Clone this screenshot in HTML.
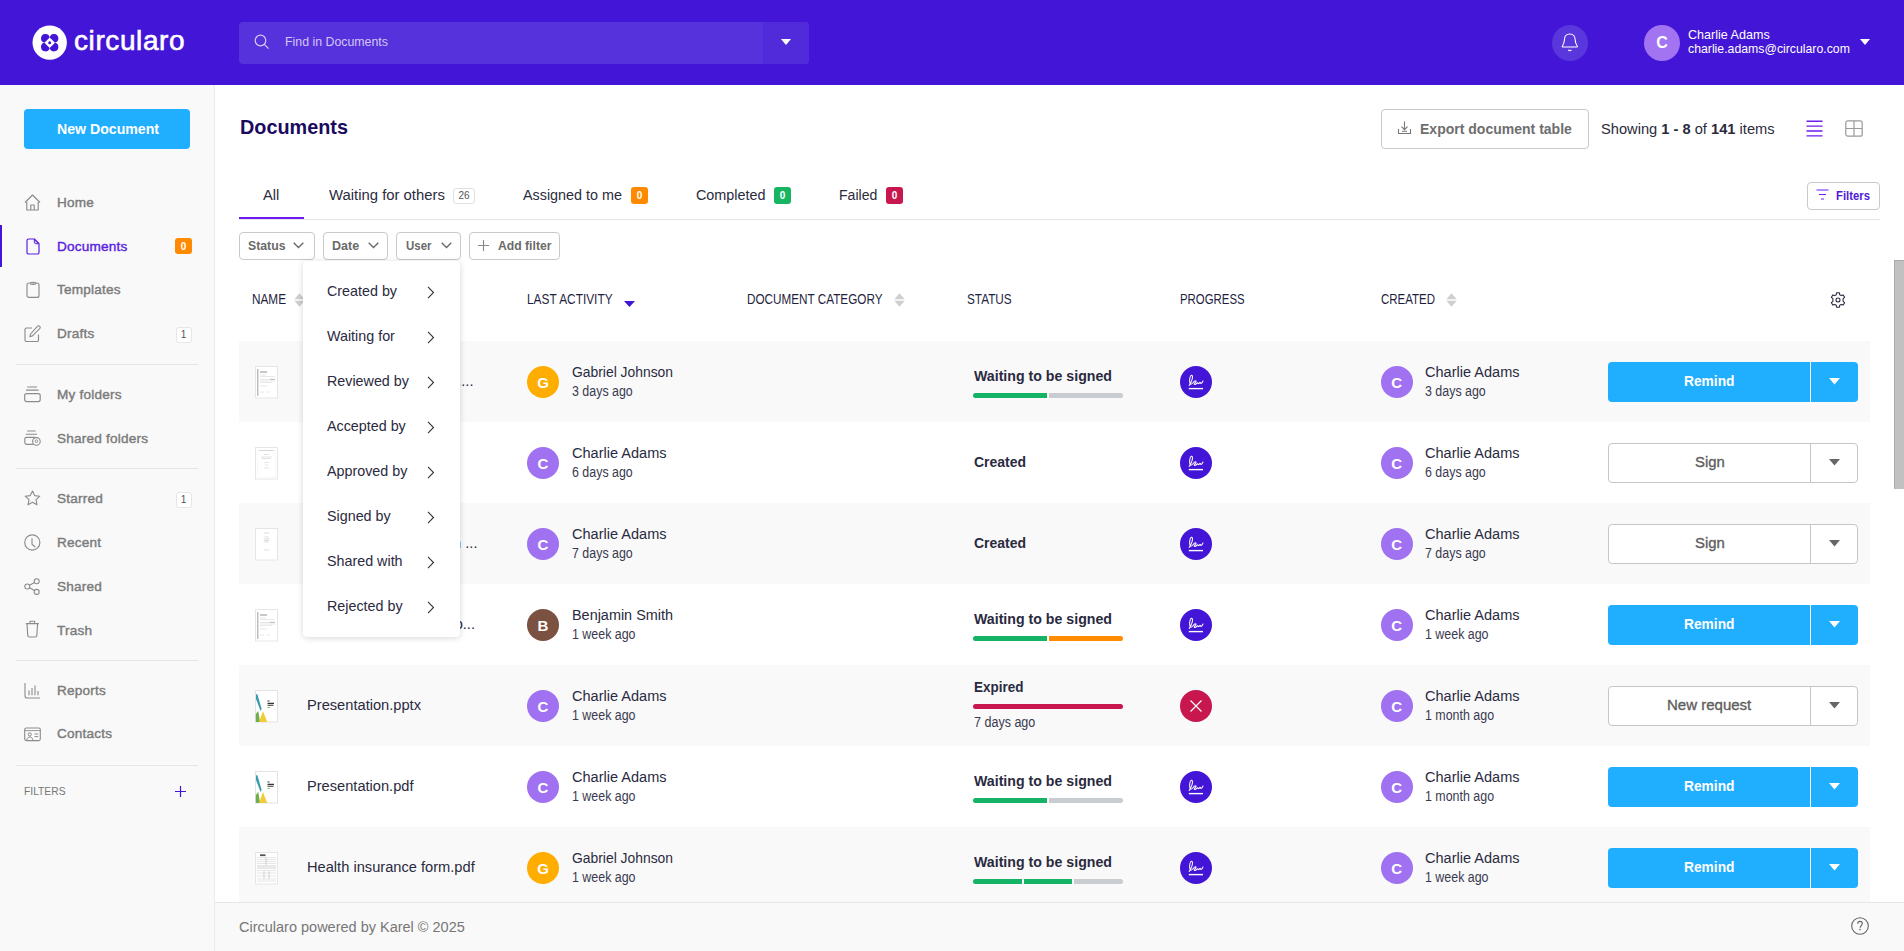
<!DOCTYPE html>
<html><head><meta charset="utf-8"><style>
html,body{margin:0;padding:0;width:1904px;height:951px;overflow:hidden;background:#fff;font-family:"Liberation Sans", sans-serif;}
.a{position:absolute;}
.t{position:absolute;white-space:nowrap;}
</style></head><body>
<div class="a" style="left:0px;top:0px;width:1904px;height:85px;background:#4315d6;"></div><svg class="a" style="left:32px;top:25px;" width="35" height="35" viewBox="0 0 35 35" fill="none"><circle cx="17.7" cy="17.6" r="17.2" fill="#fff"/><g fill="#4315d6"><path d="M17.7 12.4 L12.4 17.7 A4.4 4.4 0 1 1 17.7 12.4Z"/><path d="M17.7 12.4 L23 17.7 A4.4 4.4 0 1 0 17.7 12.4Z"/><path d="M17.7 23 L12.4 17.7 A4.4 4.4 0 1 0 17.7 23Z"/><path d="M17.7 23 L23 17.7 A4.4 4.4 0 1 1 17.7 23Z"/><circle cx="17.7" cy="17.7" r="1.5"/></g></svg><div class="t" style="left:74px;top:27.30px;font-size:28px;line-height:28px;font-weight:400;color:#fff;-webkit-text-stroke:0.6px #fff;letter-spacing:0.6px;">circularo</div><div class="a" style="left:239px;top:22px;width:570px;height:42px;background:#5632dc;border-radius:4px;"></div><div class="a" style="left:763px;top:22px;width:46px;height:42px;background:#512bd9;border-radius:0 4px 4px 0;"></div><svg class="a" style="left:254px;top:34px;" width="16" height="16" viewBox="0 0 16 16" fill="none"><circle cx="6.5" cy="6.5" r="5.3" stroke="#d7c9f7" stroke-width="1.2"/><path d="M10.3 10.3 L14.6 14.6" stroke="#d7c9f7" stroke-width="1.2"/></svg><div class="t" style="left:285.00px;top:35.49px;font-size:13.6px;line-height:13.6px;font-weight:400;color:#d4c6f6;transform:scaleX(0.9084);transform-origin:0 0;">Find in Documents</div><svg class="a" style="left:781px;top:39px;" width="10" height="6" viewBox="0 0 10 6" fill="none"><path d="M0 0 L10 0 L5 6Z" fill="#fff"/></svg><div class="a" style="left:1552px;top:25px;width:36px;height:36px;background:#5a36dd;border-radius:50%;"></div><svg class="a" style="left:1560px;top:32px;" width="20" height="20" viewBox="0 0 20 20" fill="none"><path d="M2.6 15 C2.2 15 2 14.5 2.4 14 C3.5 12.5 4.3 10.5 4.4 8 C4.5 4.3 6.8 2 9.8 2 C12.8 2 15.1 4.3 15.2 8 C15.3 10.5 16.1 12.5 17.2 14 C17.6 14.5 17.4 15 17 15 Z" stroke="#fff" stroke-width="1.1" stroke-linejoin="round"/><path d="M8.3 17.8 C8.8 19 10.8 19 11.3 17.8" stroke="#fff" stroke-width="1.1"/></svg><div class="a" style="left:1644px;top:25px;width:36px;height:36px;background:#a274f2;border-radius:50%;"></div><div class="t" style="left:1644px;top:35.46px;font-size:16px;line-height:16px;font-weight:700;color:#fff;width:36px;text-align:center;">C</div><div class="t" style="left:1688.00px;top:27.83px;font-size:13.2px;line-height:13.2px;font-weight:400;color:#fff;transform:scaleX(0.9529);transform-origin:0 0;">Charlie Adams</div><div class="t" style="left:1688.00px;top:43.08px;font-size:12.9px;line-height:12.9px;font-weight:400;color:#fff;transform:scaleX(0.9524);transform-origin:0 0;">charlie.adams@circularo.com</div><svg class="a" style="left:1860px;top:39px;" width="10" height="6" viewBox="0 0 10 6" fill="none"><path d="M0 0 L10 0 L5 6Z" fill="#fff"/></svg><div class="a" style="left:0px;top:85px;width:214px;height:866px;background:#f9f9f9;"></div><div class="a" style="left:214px;top:85px;width:1px;height:866px;background:#ebebeb;"></div><div class="a" style="left:24px;top:109px;width:166px;height:40px;background:#20aeff;border-radius:4px;"></div><div class="t" style="left:56.5px;top:121.38px;font-size:15.5px;line-height:15.5px;font-weight:700;color:#fff;transform:scaleX(0.9110681380714832);transform-origin:0 0;">New Document</div><div class="t" style="left:57px;top:195.79px;font-size:13.6px;line-height:13.6px;font-weight:400;color:#7b7b7b;-webkit-text-stroke:0.4px #7b7b7b;letter-spacing:0.2px;">Home</div><div class="t" style="left:57px;top:239.79px;font-size:13.6px;line-height:13.6px;font-weight:400;color:#5b21e2;-webkit-text-stroke:0.4px #5b21e2;letter-spacing:0.2px;">Documents</div><div class="a" style="left:0px;top:225px;width:2px;height:42px;background:#4315d6;"></div><div class="a" style="left:175px;top:238px;width:17px;height:16px;background:#ff8a00;border-radius:3px;"></div><div class="t" style="left:175px;top:241.53px;font-size:10px;line-height:10px;font-weight:700;color:#fff;width:17px;text-align:center;">0</div><div class="t" style="left:57px;top:282.99px;font-size:13.6px;line-height:13.6px;font-weight:400;color:#7b7b7b;-webkit-text-stroke:0.4px #7b7b7b;letter-spacing:0.2px;">Templates</div><div class="t" style="left:57px;top:326.99px;font-size:13.6px;line-height:13.6px;font-weight:400;color:#7b7b7b;-webkit-text-stroke:0.4px #7b7b7b;letter-spacing:0.2px;">Drafts</div><div class="a" style="left:175.5px;top:327px;width:16px;height:15.5px;background:#fff;border:1px solid #e6e6e6;border-radius:3px;box-sizing:border-box;"></div><div class="t" style="left:175.5px;top:330.04px;font-size:10px;line-height:10px;font-weight:400;color:#555;width:16px;text-align:center;">1</div><div class="t" style="left:57px;top:387.79px;font-size:13.6px;line-height:13.6px;font-weight:400;color:#7b7b7b;-webkit-text-stroke:0.4px #7b7b7b;letter-spacing:0.2px;">My folders</div><div class="t" style="left:57px;top:431.99px;font-size:13.6px;line-height:13.6px;font-weight:400;color:#7b7b7b;-webkit-text-stroke:0.4px #7b7b7b;letter-spacing:0.2px;">Shared folders</div><div class="t" style="left:57px;top:491.99px;font-size:13.6px;line-height:13.6px;font-weight:400;color:#7b7b7b;-webkit-text-stroke:0.4px #7b7b7b;letter-spacing:0.2px;">Starred</div><div class="a" style="left:175.5px;top:492px;width:16px;height:15.5px;background:#fff;border:1px solid #e6e6e6;border-radius:3px;box-sizing:border-box;"></div><div class="t" style="left:175.5px;top:495.04px;font-size:10px;line-height:10px;font-weight:400;color:#555;width:16px;text-align:center;">1</div><div class="t" style="left:57px;top:535.99px;font-size:13.6px;line-height:13.6px;font-weight:400;color:#7b7b7b;-webkit-text-stroke:0.4px #7b7b7b;letter-spacing:0.2px;">Recent</div><div class="t" style="left:57px;top:579.99px;font-size:13.6px;line-height:13.6px;font-weight:400;color:#7b7b7b;-webkit-text-stroke:0.4px #7b7b7b;letter-spacing:0.2px;">Shared</div><div class="t" style="left:57px;top:623.99px;font-size:13.6px;line-height:13.6px;font-weight:400;color:#7b7b7b;-webkit-text-stroke:0.4px #7b7b7b;letter-spacing:0.2px;">Trash</div><div class="t" style="left:57px;top:683.69px;font-size:13.6px;line-height:13.6px;font-weight:400;color:#7b7b7b;-webkit-text-stroke:0.4px #7b7b7b;letter-spacing:0.2px;">Reports</div><div class="t" style="left:57px;top:727.49px;font-size:13.6px;line-height:13.6px;font-weight:400;color:#7b7b7b;-webkit-text-stroke:0.4px #7b7b7b;letter-spacing:0.2px;">Contacts</div><svg class="a" style="left:24px;top:194px;" width="17" height="17" viewBox="0 0 17 17" fill="none"><path d="M1 8.5 L8.5 1 L16 8.5 M2.8 6.8 V16 H14.2 V6.8 M6.8 16 V11 H10.2 V16" stroke="#8c8c8c" stroke-width="1.15" stroke-linejoin="round"/></svg><svg class="a" style="left:25.5px;top:238px;" width="14" height="17" viewBox="0 0 14 17" fill="none"><path d="M2.6 1 H8.3 L13 5.7 V14.4 C13 15.3 12.3 16 11.4 16 H2.6 C1.7 16 1 15.3 1 14.4 V2.6 C1 1.7 1.7 1 2.6 1Z" stroke="#5b21e2" stroke-width="1.2" stroke-linejoin="round"/><path d="M8.3 1 V4.2 C8.3 5 8.9 5.7 9.7 5.7 H13Z" fill="#5b21e2" fill-opacity="0.25" stroke="#5b21e2" stroke-width="1" stroke-linejoin="round"/></svg><svg class="a" style="left:25.5px;top:281px;" width="14" height="17" viewBox="0 0 14 17" fill="none"><rect x="1" y="2" width="12" height="14.4" rx="2" stroke="#8c8c8c" stroke-width="1.15"/><path d="M4 2.2 C4 1 10 1 10 2.2 V3 C10 3.6 4 3.6 4 3" stroke="#8c8c8c" stroke-width="1"/></svg><svg class="a" style="left:23.5px;top:324.5px;" width="17" height="17" viewBox="0 0 17 17" fill="none"><path d="M8 3 H2.5 C1.6 3 1 3.6 1 4.5 V15 C1 15.9 1.6 16.5 2.5 16.5 H13 C13.9 16.5 14.5 15.9 14.5 15 V9.5" stroke="#8c8c8c" stroke-width="1.15"/><path d="M13.3 1.3 C14 0.6 15 0.6 15.7 1.3 C16.4 2 16.4 3 15.7 3.7 L8.5 10.9 L5.8 11.7 L6.6 9 Z" stroke="#8c8c8c" stroke-width="1.1" stroke-linejoin="round"/></svg><svg class="a" style="left:24px;top:385.5px;" width="17" height="17" viewBox="0 0 17 17" fill="none"><path d="M3.2 1 H13 M2 4.1 H14.6" stroke="#8c8c8c" stroke-width="1.1"/><rect x="0.7" y="7.6" width="15.5" height="8" rx="2" stroke="#8c8c8c" stroke-width="1.2"/></svg><svg class="a" style="left:24px;top:430px;" width="18" height="18" viewBox="0 0 18 18" fill="none"><path d="M3.2 1 H11.6 M1.8 4.3 H13" stroke="#8c8c8c" stroke-width="1.1"/><path d="M9.5 14.3 H2.5 C1.5 14.3 0.8 13.6 0.8 12.6 V9 C0.8 8 1.5 7.4 2.5 7.4 H11" stroke="#8c8c8c" stroke-width="1.15"/><circle cx="12.4" cy="11.4" r="3.8" stroke="#8c8c8c" stroke-width="1.1"/><circle cx="12.4" cy="11.2" r="1.3" stroke="#8c8c8c" stroke-width="0.9"/></svg><svg class="a" style="left:24px;top:489.5px;" width="17" height="16" viewBox="0 0 17 16" fill="none"><path d="M8.5 1 L10.7 5.6 L15.8 6.2 L12 9.7 L13 14.8 L8.5 12.3 L4 14.8 L5 9.7 L1.2 6.2 L6.3 5.6 Z" stroke="#8c8c8c" stroke-width="1.1" stroke-linejoin="round"/></svg><svg class="a" style="left:24px;top:534px;" width="17" height="17" viewBox="0 0 17 17" fill="none"><circle cx="8.3" cy="8.5" r="7.6" stroke="#8c8c8c" stroke-width="1.15"/><path d="M8 4.2 V10.2 L11.2 13" stroke="#8c8c8c" stroke-width="1.15"/></svg><svg class="a" style="left:23.5px;top:577.5px;" width="17" height="17" viewBox="0 0 17 17" fill="none"><circle cx="3.3" cy="8.5" r="2.5" stroke="#8c8c8c" stroke-width="1.1"/><circle cx="12.7" cy="3.3" r="2.5" stroke="#8c8c8c" stroke-width="1.1"/><circle cx="12.7" cy="13.9" r="2.5" stroke="#8c8c8c" stroke-width="1.1"/><path d="M5.5 7.3 L10.5 4.5 M5.5 9.7 L10.5 12.6" stroke="#8c8c8c" stroke-width="1.1"/></svg><svg class="a" style="left:24.5px;top:619.5px;" width="15" height="18" viewBox="0 0 15 18" fill="none"><path d="M0.8 3.6 H13.8 M5 3.4 V1.2 H9.6 V3.4" stroke="#8c8c8c" stroke-width="1.1"/><path d="M2 4 L2.8 15.8 C2.9 16.6 3.4 17 4.2 17 H10.4 C11.2 17 11.7 16.6 11.8 15.8 L12.6 4" stroke="#8c8c8c" stroke-width="1.15"/></svg><svg class="a" style="left:24px;top:682px;" width="17" height="17" viewBox="0 0 17 17" fill="none"><path d="M1 1 V14 C1 15.1 1.8 16 3 16 H16" stroke="#8c8c8c" stroke-width="1.1"/><path d="M5 8.5 V13.3 M8 6 V13.3 M11 3.5 V13.3 M14 9 V13.3" stroke="#8c8c8c" stroke-width="1.1"/></svg><svg class="a" style="left:24px;top:727px;" width="17" height="15" viewBox="0 0 17 15" fill="none"><rect x="0.7" y="1" width="15.6" height="12.6" rx="1.5" stroke="#8c8c8c" stroke-width="1.1"/><path d="M0.7 3.6 H16.3" stroke="#8c8c8c" stroke-width="0.9"/><circle cx="5.8" cy="7.4" r="1.6" stroke="#8c8c8c" stroke-width="1"/><path d="M2.6 13.3 C3 11 4.3 10 5.8 10 C7.3 10 8.6 11 9 13.3" stroke="#8c8c8c" stroke-width="1"/><path d="M10.5 7 H14.2 M10.5 9.6 H14.2" stroke="#8c8c8c" stroke-width="1"/></svg><div class="a" style="left:16px;top:364px;width:182px;height:1px;background:#e6e6e6;"></div><div class="a" style="left:16px;top:468px;width:182px;height:1px;background:#e6e6e6;"></div><div class="a" style="left:16px;top:660px;width:182px;height:1px;background:#e6e6e6;"></div><div class="a" style="left:16px;top:765px;width:182px;height:1px;background:#e6e6e6;"></div><div class="t" style="left:24.00px;top:786.43px;font-size:11.3px;line-height:11.3px;font-weight:400;color:#777;transform:scaleX(0.9096);transform-origin:0 0;">FILTERS</div><svg class="a" style="left:175px;top:786px;" width="11" height="11" viewBox="0 0 11 11" fill="none"><path d="M5.5 0 V11 M0 5.5 H11" stroke="#4315d6" stroke-width="1.2"/></svg><div class="t" style="left:240.00px;top:117.09px;font-size:20.8px;line-height:20.8px;font-weight:700;color:#1a0b5e;transform:scaleX(0.9535);transform-origin:0 0;">Documents</div><div class="a" style="left:1381px;top:109px;width:208px;height:40px;border:1px solid #c9c9c9;border-radius:4px;box-sizing:border-box;background:#fff;"></div><svg class="a" style="left:1397px;top:121px;" width="15" height="14" viewBox="0 0 15 14" fill="none"><path d="M7.5 0.5 V8.5 M4.5 5.7 L7.5 8.7 L10.5 5.7" stroke="#777" stroke-width="1.1"/><path d="M1.5 8 V12.5 H13.5 V8 M5 10.3 H10" stroke="#777" stroke-width="1.1"/></svg><div class="t" style="left:1420.00px;top:121.13px;font-size:15.2px;line-height:15.2px;font-weight:700;color:#6e6e6e;transform:scaleX(0.9230);transform-origin:0 0;">Export document table</div><div class="t" style="left:1601.00px;top:121.05px;font-size:15.3px;line-height:15.3px;font-weight:400;color:#2b2b3b;transform:scaleX(0.9583);transform-origin:0 0;">Showing <b>1 - 8</b> of <b>141</b> items</div><svg class="a" style="left:1806px;top:120px;" width="17" height="17" viewBox="0 0 17 17" fill="none"><path d="M0.5 1.2 H16.5 M0.5 6.1 H16.5 M0.5 11 H16.5 M0.5 15.9 H16.5" stroke="#6c1cf2" stroke-width="1.4"/></svg><svg class="a" style="left:1845px;top:120px;" width="18" height="17" viewBox="0 0 18 17" fill="none"><rect x="0.8" y="0.8" width="16.4" height="15.4" rx="2" stroke="#9a9a9a" stroke-width="1.2"/><path d="M9 0.8 V16.2 M0.8 8.5 H17.2" stroke="#9a9a9a" stroke-width="1.2"/></svg><div class="t" style="left:263.30px;top:187.13px;font-size:15.2px;line-height:15.2px;font-weight:400;color:#2c2c3c;transform:scaleX(0.9649);transform-origin:0 0;">All</div><div class="t" style="left:328.60px;top:187.13px;font-size:15.2px;line-height:15.2px;font-weight:400;color:#2c2c3c;transform:scaleX(0.9785);transform-origin:0 0;">Waiting for others</div><div class="a" style="left:453px;top:187.5px;width:22px;height:16px;border:1px solid #e0e0e0;border-radius:3px;box-sizing:border-box;background:#fff;"></div><div class="t" style="left:453px;top:190.53px;font-size:10px;line-height:10px;font-weight:400;color:#555;width:22px;text-align:center;">26</div><div class="t" style="left:523.20px;top:187.13px;font-size:15.2px;line-height:15.2px;font-weight:400;color:#2c2c3c;transform:scaleX(0.9449);transform-origin:0 0;">Assigned to me</div><div class="a" style="left:631px;top:187px;width:17px;height:17px;background:#ff8a00;border-radius:3px;"></div><div class="t" style="left:631px;top:191.03px;font-size:10px;line-height:10px;font-weight:700;color:#fff;width:17px;text-align:center;">0</div><div class="t" style="left:696.30px;top:187.13px;font-size:15.2px;line-height:15.2px;font-weight:400;color:#2c2c3c;transform:scaleX(0.9455);transform-origin:0 0;">Completed</div><div class="a" style="left:774px;top:187px;width:17px;height:17px;background:#17b462;border-radius:3px;"></div><div class="t" style="left:774px;top:191.03px;font-size:10px;line-height:10px;font-weight:700;color:#fff;width:17px;text-align:center;">0</div><div class="t" style="left:839.30px;top:187.13px;font-size:15.2px;line-height:15.2px;font-weight:400;color:#2c2c3c;transform:scaleX(0.9275);transform-origin:0 0;">Failed</div><div class="a" style="left:886px;top:187px;width:17px;height:17px;background:#c8174f;border-radius:3px;"></div><div class="t" style="left:886px;top:191.03px;font-size:10px;line-height:10px;font-weight:700;color:#fff;width:17px;text-align:center;">0</div><div class="a" style="left:239px;top:219px;width:1641px;height:1px;background:#e6e6e6;"></div><div class="a" style="left:239px;top:217px;width:65px;height:2px;background:#6c1cf2;"></div><div class="a" style="left:1807px;top:182px;width:73px;height:28px;border:1px solid #c9c9c9;border-radius:4px;box-sizing:border-box;background:#fff;"></div><svg class="a" style="left:1816px;top:189px;" width="13" height="12" viewBox="0 0 13 12" fill="none"><path d="M0.5 1 H12.5 M3 5.5 H10 M5 10 H8" stroke="#6c1cf2" stroke-width="1.2"/></svg><div class="t" style="left:1836.40px;top:188.57px;font-size:13.5px;line-height:13.5px;font-weight:700;color:#4d1ad8;transform:scaleX(0.8392);transform-origin:0 0;">Filters</div><div class="a" style="left:239px;top:232px;width:76px;height:27.5px;border:1px solid #c9c9c9;border-radius:4px;box-sizing:border-box;background:#fff;"></div><div class="t" style="left:247.90px;top:239.26px;font-size:13.4px;line-height:13.4px;font-weight:700;color:#6a6a6a;transform:scaleX(0.9157);transform-origin:0 0;">Status</div><svg class="a" style="left:293.4px;top:242px;" width="11" height="7" viewBox="0 0 11 7" fill="none"><path d="M0.7 0.7 L5.5 5.5 L10.3 0.7" stroke="#666" stroke-width="1.3"/></svg><div class="a" style="left:323px;top:232px;width:65px;height:27.5px;border:1px solid #c9c9c9;border-radius:4px;box-sizing:border-box;background:#fff;"></div><div class="t" style="left:331.80px;top:239.26px;font-size:13.4px;line-height:13.4px;font-weight:700;color:#6a6a6a;transform:scaleX(0.9331);transform-origin:0 0;">Date</div><svg class="a" style="left:367.9px;top:242px;" width="11" height="7" viewBox="0 0 11 7" fill="none"><path d="M0.7 0.7 L5.5 5.5 L10.3 0.7" stroke="#666" stroke-width="1.3"/></svg><div class="a" style="left:396px;top:232px;width:65px;height:27.5px;border:1px solid #c9c9c9;border-radius:4px;box-sizing:border-box;background:#fff;"></div><div class="t" style="left:405.90px;top:239.26px;font-size:13.4px;line-height:13.4px;font-weight:700;color:#6a6a6a;transform:scaleX(0.8558);transform-origin:0 0;">User</div><svg class="a" style="left:440.7px;top:242px;" width="11" height="7" viewBox="0 0 11 7" fill="none"><path d="M0.7 0.7 L5.5 5.5 L10.3 0.7" stroke="#666" stroke-width="1.3"/></svg><div class="a" style="left:469px;top:232px;width:91px;height:27.5px;border:1px solid #c9c9c9;border-radius:4px;box-sizing:border-box;background:#fff;"></div><svg class="a" style="left:478px;top:240px;" width="11" height="11" viewBox="0 0 11 11" fill="none"><path d="M5.5 0 V11 M0 5.5 H11" stroke="#888" stroke-width="1.1"/></svg><div class="t" style="left:497.90px;top:239.26px;font-size:13.4px;line-height:13.4px;font-weight:700;color:#6a6a6a;transform:scaleX(0.9097);transform-origin:0 0;">Add filter</div><div class="t" style="left:251.5px;top:292.82px;font-size:13.8px;line-height:13.8px;font-weight:400;color:#1f1f3f;transform:scaleX(0.8528100089795877);transform-origin:0 0;">NAME</div><svg class="a" style="left:293.5px;top:293px;" width="11" height="14" viewBox="0 0 11 14" fill="none"><path d="M0.3 6.2 L5.5 0.3 L10.7 6.2Z M0.3 7.8 L5.5 13.7 L10.7 7.8Z" fill="#cfcfcf"/></svg><div class="t" style="left:527.2px;top:292.82px;font-size:13.8px;line-height:13.8px;font-weight:400;color:#1f1f3f;transform:scaleX(0.8607963573028916);transform-origin:0 0;">LAST ACTIVITY</div><svg class="a" style="left:623.9px;top:301px;" width="11" height="6" viewBox="0 0 11 6" fill="none"><path d="M0 0 H11 L5.5 6Z" fill="#4315d6"/></svg><div class="t" style="left:747.3px;top:292.82px;font-size:13.8px;line-height:13.8px;font-weight:400;color:#1f1f3f;transform:scaleX(0.8496011577148174);transform-origin:0 0;">DOCUMENT CATEGORY</div><svg class="a" style="left:893.5px;top:293px;" width="11" height="14" viewBox="0 0 11 14" fill="none"><path d="M0.3 6.2 L5.5 0.3 L10.7 6.2Z M0.3 7.8 L5.5 13.7 L10.7 7.8Z" fill="#cfcfcf"/></svg><div class="t" style="left:967.3px;top:292.82px;font-size:13.8px;line-height:13.8px;font-weight:400;color:#1f1f3f;transform:scaleX(0.8533009575296652);transform-origin:0 0;">STATUS</div><div class="t" style="left:1179.7px;top:292.82px;font-size:13.8px;line-height:13.8px;font-weight:400;color:#1f1f3f;transform:scaleX(0.8258926288443639);transform-origin:0 0;">PROGRESS</div><div class="t" style="left:1380.7px;top:292.82px;font-size:13.8px;line-height:13.8px;font-weight:400;color:#1f1f3f;transform:scaleX(0.8318544809228039);transform-origin:0 0;">CREATED</div><svg class="a" style="left:1445.5px;top:293px;" width="11" height="14" viewBox="0 0 11 14" fill="none"><path d="M0.3 6.2 L5.5 0.3 L10.7 6.2Z M0.3 7.8 L5.5 13.7 L10.7 7.8Z" fill="#cfcfcf"/></svg><svg class="a" style="left:1830px;top:292px;" width="16" height="16" viewBox="0 0 16 16" fill="none"><path d="M6.6 0.8 H9.4 L9.8 2.8 L11.3 3.6 L13.2 2.9 L14.6 5.3 L13.1 6.6 V9.4 L14.6 10.7 L13.2 13.1 L11.3 12.4 L9.8 13.2 L9.4 15.2 H6.6 L6.2 13.2 L4.7 12.4 L2.8 13.1 L1.4 10.7 L2.9 9.4 V6.6 L1.4 5.3 L2.8 2.9 L4.7 3.6 L6.2 2.8Z" stroke="#23233a" stroke-width="1.05" stroke-linejoin="round"/><circle cx="8" cy="8" r="2" stroke="#23233a" stroke-width="1.05"/></svg><div class="a" style="left:239px;top:341px;width:1631px;height:81px;background:#f9f9f9;"></div><svg class="a" style="left:255px;top:365.5px;" width="23" height="33" viewBox="0 0 23 33" fill="none"><rect x="0.5" y="0.5" width="22" height="31.5" fill="#fff" stroke="#e6e6e6"/><path d="M2.8 3 V30" stroke="#777" stroke-width="0.7"/><path d="M5 6 H12" stroke="#777" stroke-width="0.8"/><path d="M5 9 H11 M5 10.5 H20 M5 13.5 H20 M5 15 H20 M5 16.5 H17 M5 20 H12 M5 26 H9 M12 26 H15" stroke="#ccc" stroke-width="0.45"/><path d="M15 13.3 H20" stroke="#999" stroke-width="0.6"/></svg><div class="t" style="left:413.5px;top:374.10px;font-size:14.65px;line-height:14.65px;font-weight:400;color:#2a2a40;width:60px;text-align:right;">....</div><div class="a" style="left:527px;top:366px;width:32px;height:32px;background:#ffad00;border-radius:50%;"></div><div class="t" style="left:527px;top:375.30px;font-size:15px;line-height:15px;font-weight:700;color:#fff;width:32px;text-align:center;">G</div><div class="t" style="left:571.50px;top:363.68px;font-size:15.5px;line-height:15.5px;font-weight:400;color:#2a2a40;transform:scaleX(0.8948);transform-origin:0 0;">Gabriel Johnson</div><div class="t" style="left:571.50px;top:384.72px;font-size:13.8px;line-height:13.8px;font-weight:400;color:#3a3a50;transform:scaleX(0.9000);transform-origin:0 0;">3 days ago</div><div class="t" style="left:973.50px;top:368.05px;font-size:15.3px;line-height:15.3px;font-weight:700;color:#2a2a40;transform:scaleX(0.9260);transform-origin:0 0;">Waiting to be signed</div><div class="a" style="left:973px;top:393px;width:150px;height:5px;border-radius:2.5px;overflow:hidden;"><div class="a" style="left:0.00px;top:0;width:74.00px;height:5px;background:#15b366;"></div><div class="a" style="left:76.00px;top:0;width:74.00px;height:5px;background:#c9ccd1;"></div></div><div class="a" style="left:1180px;top:366px;width:32px;height:32px;background:#4315d6;border-radius:50%;"></div><svg class="a" style="left:1188px;top:374px;" width="16" height="16" viewBox="0 0 16 16" fill="none"><path d="M1.2 11.5 C2.5 9.5 4.8 4.5 4.4 2.2 C4.1 0.6 2.6 0.9 2 3.5 C1.4 6.2 1.6 9.8 2.6 10.2 C3.6 10.6 5 8.5 6.5 7.2 C7.8 6.2 8.6 7.2 7.6 8.2 C6.6 9.2 5.8 9.6 6.2 10.2 C6.6 10.8 8.2 10 9.2 8.8 C9.8 8.2 10 9.8 10.8 9.6 C11.5 9.4 11.6 8.2 12.2 8.4 C12.8 8.6 12.6 9.8 13.4 9.4 C14 9.1 14.5 7.8 15 7" stroke="#fff" stroke-width="1.05" stroke-linecap="round" stroke-linejoin="round"/><path d="M0.8 14.6 H15" stroke="#fff" stroke-width="1.4"/></svg><div class="a" style="left:1380.7px;top:366px;width:32px;height:32px;background:#a071f0;border-radius:50%;"></div><div class="t" style="left:1380.7px;top:375.30px;font-size:15px;line-height:15px;font-weight:700;color:#fff;width:32px;text-align:center;">C</div><div class="t" style="left:1425.00px;top:363.68px;font-size:15.5px;line-height:15.5px;font-weight:400;color:#2a2a40;transform:scaleX(0.9375);transform-origin:0 0;">Charlie Adams</div><div class="t" style="left:1425.00px;top:384.72px;font-size:13.8px;line-height:13.8px;font-weight:400;color:#3a3a50;transform:scaleX(0.9000);transform-origin:0 0;">3 days ago</div><div class="a" style="left:1608px;top:362px;width:250px;height:40px;background:#20aeff;border-radius:4px;"></div><div class="a" style="left:1810px;top:362px;width:1px;height:40px;background:#fff;"></div><div class="t" style="left:1683.75px;top:373.23px;font-size:15.2px;line-height:15.2px;font-weight:700;color:#fff;transform:scaleX(0.9060);transform-origin:0 0;">Remind</div><svg class="a" style="left:1829px;top:378px;" width="11" height="7" viewBox="0 0 11 7" fill="none"><path d="M0 0 H11 L5.5 6.5Z" fill="#fff"/></svg><svg class="a" style="left:255px;top:446.5px;" width="23" height="33" viewBox="0 0 23 33" fill="none"><rect x="0.5" y="0.5" width="22" height="31.5" fill="#fff" stroke="#e6e6e6"/><path d="M4 3.5 H19" stroke="#ccc" stroke-width="0.8"/><path d="M9 7.5 H14 M6 10 H17 M7 11.5 H16 M9.5 15.5 H13.5 M10 18 H13 M9 21 H14" stroke="#c4c4c4" stroke-width="0.5"/><path d="M2.5 2 V30 H20.5 V2" stroke="#f0f0f0" stroke-width="0.5"/></svg><div class="a" style="left:527px;top:447px;width:32px;height:32px;background:#a071f0;border-radius:50%;"></div><div class="t" style="left:527px;top:456.30px;font-size:15px;line-height:15px;font-weight:700;color:#fff;width:32px;text-align:center;">C</div><div class="t" style="left:571.50px;top:444.68px;font-size:15.5px;line-height:15.5px;font-weight:400;color:#2a2a40;transform:scaleX(0.9375);transform-origin:0 0;">Charlie Adams</div><div class="t" style="left:571.50px;top:465.72px;font-size:13.8px;line-height:13.8px;font-weight:400;color:#3a3a50;transform:scaleX(0.9000);transform-origin:0 0;">6 days ago</div><div class="t" style="left:973.50px;top:454.05px;font-size:15.3px;line-height:15.3px;font-weight:700;color:#2a2a40;transform:scaleX(0.9127);transform-origin:0 0;">Created</div><div class="a" style="left:1180px;top:447px;width:32px;height:32px;background:#4315d6;border-radius:50%;"></div><svg class="a" style="left:1188px;top:455px;" width="16" height="16" viewBox="0 0 16 16" fill="none"><path d="M1.2 11.5 C2.5 9.5 4.8 4.5 4.4 2.2 C4.1 0.6 2.6 0.9 2 3.5 C1.4 6.2 1.6 9.8 2.6 10.2 C3.6 10.6 5 8.5 6.5 7.2 C7.8 6.2 8.6 7.2 7.6 8.2 C6.6 9.2 5.8 9.6 6.2 10.2 C6.6 10.8 8.2 10 9.2 8.8 C9.8 8.2 10 9.8 10.8 9.6 C11.5 9.4 11.6 8.2 12.2 8.4 C12.8 8.6 12.6 9.8 13.4 9.4 C14 9.1 14.5 7.8 15 7" stroke="#fff" stroke-width="1.05" stroke-linecap="round" stroke-linejoin="round"/><path d="M0.8 14.6 H15" stroke="#fff" stroke-width="1.4"/></svg><div class="a" style="left:1380.7px;top:447px;width:32px;height:32px;background:#a071f0;border-radius:50%;"></div><div class="t" style="left:1380.7px;top:456.30px;font-size:15px;line-height:15px;font-weight:700;color:#fff;width:32px;text-align:center;">C</div><div class="t" style="left:1425.00px;top:444.68px;font-size:15.5px;line-height:15.5px;font-weight:400;color:#2a2a40;transform:scaleX(0.9375);transform-origin:0 0;">Charlie Adams</div><div class="t" style="left:1425.00px;top:465.72px;font-size:13.8px;line-height:13.8px;font-weight:400;color:#3a3a50;transform:scaleX(0.9000);transform-origin:0 0;">6 days ago</div><div class="a" style="left:1608px;top:443px;width:250px;height:40px;background:#fff;border:1px solid #c6c6c6;border-radius:4px;box-sizing:border-box;"></div><div class="a" style="left:1810px;top:443px;width:1px;height:40px;background:#c6c6c6;"></div><div class="t" style="left:1694.60px;top:453.76px;font-size:15.4px;line-height:15.4px;font-weight:400;color:#5e5e5e;transform:scaleX(0.9668);transform-origin:0 0;-webkit-text-stroke:0.35px #5e5e5e;">Sign</div><svg class="a" style="left:1829px;top:459px;" width="11" height="7" viewBox="0 0 11 7" fill="none"><path d="M0 0 H11 L5.5 6.5Z" fill="#666"/></svg><div class="a" style="left:239px;top:503px;width:1631px;height:81px;background:#f9f9f9;"></div><svg class="a" style="left:255px;top:527.5px;" width="23" height="33" viewBox="0 0 23 33" fill="none"><rect x="0.5" y="0.5" width="22" height="31.5" fill="#fff" stroke="#e6e6e6"/><path d="M9 5 H14 M9.5 9 H13.5 M8.5 11 H14.5 M9 12.5 H14 M9.5 14 H13.5 M9 22 H14" stroke="#bbb" stroke-width="0.5"/></svg><div class="t" style="left:417.5px;top:536.10px;font-size:14.65px;line-height:14.65px;font-weight:400;color:#2a2a40;width:60px;text-align:right;">n ...</div><div class="a" style="left:527px;top:528px;width:32px;height:32px;background:#a071f0;border-radius:50%;"></div><div class="t" style="left:527px;top:537.30px;font-size:15px;line-height:15px;font-weight:700;color:#fff;width:32px;text-align:center;">C</div><div class="t" style="left:571.50px;top:525.68px;font-size:15.5px;line-height:15.5px;font-weight:400;color:#2a2a40;transform:scaleX(0.9375);transform-origin:0 0;">Charlie Adams</div><div class="t" style="left:571.50px;top:546.72px;font-size:13.8px;line-height:13.8px;font-weight:400;color:#3a3a50;transform:scaleX(0.9000);transform-origin:0 0;">7 days ago</div><div class="t" style="left:973.50px;top:535.05px;font-size:15.3px;line-height:15.3px;font-weight:700;color:#2a2a40;transform:scaleX(0.9127);transform-origin:0 0;">Created</div><div class="a" style="left:1180px;top:528px;width:32px;height:32px;background:#4315d6;border-radius:50%;"></div><svg class="a" style="left:1188px;top:536px;" width="16" height="16" viewBox="0 0 16 16" fill="none"><path d="M1.2 11.5 C2.5 9.5 4.8 4.5 4.4 2.2 C4.1 0.6 2.6 0.9 2 3.5 C1.4 6.2 1.6 9.8 2.6 10.2 C3.6 10.6 5 8.5 6.5 7.2 C7.8 6.2 8.6 7.2 7.6 8.2 C6.6 9.2 5.8 9.6 6.2 10.2 C6.6 10.8 8.2 10 9.2 8.8 C9.8 8.2 10 9.8 10.8 9.6 C11.5 9.4 11.6 8.2 12.2 8.4 C12.8 8.6 12.6 9.8 13.4 9.4 C14 9.1 14.5 7.8 15 7" stroke="#fff" stroke-width="1.05" stroke-linecap="round" stroke-linejoin="round"/><path d="M0.8 14.6 H15" stroke="#fff" stroke-width="1.4"/></svg><div class="a" style="left:1380.7px;top:528px;width:32px;height:32px;background:#a071f0;border-radius:50%;"></div><div class="t" style="left:1380.7px;top:537.30px;font-size:15px;line-height:15px;font-weight:700;color:#fff;width:32px;text-align:center;">C</div><div class="t" style="left:1425.00px;top:525.68px;font-size:15.5px;line-height:15.5px;font-weight:400;color:#2a2a40;transform:scaleX(0.9375);transform-origin:0 0;">Charlie Adams</div><div class="t" style="left:1425.00px;top:546.72px;font-size:13.8px;line-height:13.8px;font-weight:400;color:#3a3a50;transform:scaleX(0.9000);transform-origin:0 0;">7 days ago</div><div class="a" style="left:1608px;top:524px;width:250px;height:40px;background:#fff;border:1px solid #c6c6c6;border-radius:4px;box-sizing:border-box;"></div><div class="a" style="left:1810px;top:524px;width:1px;height:40px;background:#c6c6c6;"></div><div class="t" style="left:1694.60px;top:534.76px;font-size:15.4px;line-height:15.4px;font-weight:400;color:#5e5e5e;transform:scaleX(0.9668);transform-origin:0 0;-webkit-text-stroke:0.35px #5e5e5e;">Sign</div><svg class="a" style="left:1829px;top:540px;" width="11" height="7" viewBox="0 0 11 7" fill="none"><path d="M0 0 H11 L5.5 6.5Z" fill="#666"/></svg><svg class="a" style="left:255px;top:608.5px;" width="23" height="33" viewBox="0 0 23 33" fill="none"><rect x="0.5" y="0.5" width="22" height="31.5" fill="#fff" stroke="#e6e6e6"/><path d="M2.8 3 V30" stroke="#777" stroke-width="0.7"/><path d="M5 6 H12" stroke="#777" stroke-width="0.8"/><path d="M5 9 H11 M5 10.5 H20 M5 13.5 H20 M5 15 H20 M5 16.5 H17 M5 20 H12 M5 26 H9 M12 26 H15" stroke="#ccc" stroke-width="0.45"/><path d="M15 13.3 H20" stroke="#999" stroke-width="0.6"/></svg><div class="t" style="left:415px;top:617.10px;font-size:14.65px;line-height:14.65px;font-weight:400;color:#2a2a40;width:60px;text-align:right;">o...</div><div class="a" style="left:527px;top:609px;width:32px;height:32px;background:#7b5141;border-radius:50%;"></div><div class="t" style="left:527px;top:618.30px;font-size:15px;line-height:15px;font-weight:700;color:#fff;width:32px;text-align:center;">B</div><div class="t" style="left:571.50px;top:606.68px;font-size:15.5px;line-height:15.5px;font-weight:400;color:#2a2a40;transform:scaleX(0.9305);transform-origin:0 0;">Benjamin Smith</div><div class="t" style="left:571.50px;top:627.72px;font-size:13.8px;line-height:13.8px;font-weight:400;color:#3a3a50;transform:scaleX(0.9000);transform-origin:0 0;">1 week ago</div><div class="t" style="left:973.50px;top:611.05px;font-size:15.3px;line-height:15.3px;font-weight:700;color:#2a2a40;transform:scaleX(0.9260);transform-origin:0 0;">Waiting to be signed</div><div class="a" style="left:973px;top:636px;width:150px;height:5px;border-radius:2.5px;overflow:hidden;"><div class="a" style="left:0.00px;top:0;width:74.00px;height:5px;background:#15b366;"></div><div class="a" style="left:76.00px;top:0;width:74.00px;height:5px;background:#ff8c00;"></div></div><div class="a" style="left:1180px;top:609px;width:32px;height:32px;background:#4315d6;border-radius:50%;"></div><svg class="a" style="left:1188px;top:617px;" width="16" height="16" viewBox="0 0 16 16" fill="none"><path d="M1.2 11.5 C2.5 9.5 4.8 4.5 4.4 2.2 C4.1 0.6 2.6 0.9 2 3.5 C1.4 6.2 1.6 9.8 2.6 10.2 C3.6 10.6 5 8.5 6.5 7.2 C7.8 6.2 8.6 7.2 7.6 8.2 C6.6 9.2 5.8 9.6 6.2 10.2 C6.6 10.8 8.2 10 9.2 8.8 C9.8 8.2 10 9.8 10.8 9.6 C11.5 9.4 11.6 8.2 12.2 8.4 C12.8 8.6 12.6 9.8 13.4 9.4 C14 9.1 14.5 7.8 15 7" stroke="#fff" stroke-width="1.05" stroke-linecap="round" stroke-linejoin="round"/><path d="M0.8 14.6 H15" stroke="#fff" stroke-width="1.4"/></svg><div class="a" style="left:1380.7px;top:609px;width:32px;height:32px;background:#a071f0;border-radius:50%;"></div><div class="t" style="left:1380.7px;top:618.30px;font-size:15px;line-height:15px;font-weight:700;color:#fff;width:32px;text-align:center;">C</div><div class="t" style="left:1425.00px;top:606.68px;font-size:15.5px;line-height:15.5px;font-weight:400;color:#2a2a40;transform:scaleX(0.9375);transform-origin:0 0;">Charlie Adams</div><div class="t" style="left:1425.00px;top:627.72px;font-size:13.8px;line-height:13.8px;font-weight:400;color:#3a3a50;transform:scaleX(0.9000);transform-origin:0 0;">1 week ago</div><div class="a" style="left:1608px;top:605px;width:250px;height:40px;background:#20aeff;border-radius:4px;"></div><div class="a" style="left:1810px;top:605px;width:1px;height:40px;background:#fff;"></div><div class="t" style="left:1683.75px;top:616.23px;font-size:15.2px;line-height:15.2px;font-weight:700;color:#fff;transform:scaleX(0.9060);transform-origin:0 0;">Remind</div><svg class="a" style="left:1829px;top:621px;" width="11" height="7" viewBox="0 0 11 7" fill="none"><path d="M0 0 H11 L5.5 6.5Z" fill="#fff"/></svg><div class="a" style="left:239px;top:665px;width:1631px;height:81px;background:#f9f9f9;"></div><svg class="a" style="left:255px;top:689.5px;" width="23" height="33" viewBox="0 0 23 33" fill="none"><rect x="0.5" y="0.5" width="22" height="31.5" fill="#fff" stroke="#e3e3e3"/><path d="M1 4.2 L2.4 4.2 L6.6 18.8 L5.6 21 L1 9Z" fill="#3a9bb0"/><path d="M0.8 32 L0.8 24 L3.3 21 L5 32Z" fill="#6fae4a"/><path d="M4 32 L8 21 L12.2 32Z" fill="#f2cb3a"/><path d="M12.5 11 H14.5 M12.5 13.4 H19 M12.5 15.2 H18.5" stroke="#333" stroke-width="1.1"/><path d="M12.5 17.5 H15" stroke="#6fae4a" stroke-width="0.8"/></svg><div class="t" style="left:307.00px;top:697.38px;font-size:15.5px;line-height:15.5px;font-weight:400;color:#2a2a40;transform:scaleX(0.9450);transform-origin:0 0;">Presentation.pptx</div><div class="a" style="left:527px;top:690px;width:32px;height:32px;background:#a071f0;border-radius:50%;"></div><div class="t" style="left:527px;top:699.30px;font-size:15px;line-height:15px;font-weight:700;color:#fff;width:32px;text-align:center;">C</div><div class="t" style="left:571.50px;top:687.68px;font-size:15.5px;line-height:15.5px;font-weight:400;color:#2a2a40;transform:scaleX(0.9375);transform-origin:0 0;">Charlie Adams</div><div class="t" style="left:571.50px;top:708.72px;font-size:13.8px;line-height:13.8px;font-weight:400;color:#3a3a50;transform:scaleX(0.9000);transform-origin:0 0;">1 week ago</div><div class="t" style="left:973.50px;top:679.05px;font-size:15.3px;line-height:15.3px;font-weight:700;color:#2a2a40;transform:scaleX(0.8803);transform-origin:0 0;">Expired</div><div class="a" style="left:973px;top:704.2px;width:150px;height:5px;border-radius:2.5px;overflow:hidden;"><div class="a" style="left:0.00px;top:0;width:150.00px;height:5px;background:#c8174f;"></div></div><div class="t" style="left:973.50px;top:716.32px;font-size:13.8px;line-height:13.8px;font-weight:400;color:#3a3a50;transform:scaleX(0.9079);transform-origin:0 0;">7 days ago</div><div class="a" style="left:1180px;top:690px;width:32px;height:32px;background:#c8174f;border-radius:50%;"></div><svg class="a" style="left:1190px;top:700px;" width="12" height="12" viewBox="0 0 12 12" fill="none"><path d="M0.5 0.5 L11.5 11.5 M11.5 0.5 L0.5 11.5" stroke="#fff" stroke-width="1.2"/></svg><div class="a" style="left:1380.7px;top:690px;width:32px;height:32px;background:#a071f0;border-radius:50%;"></div><div class="t" style="left:1380.7px;top:699.30px;font-size:15px;line-height:15px;font-weight:700;color:#fff;width:32px;text-align:center;">C</div><div class="t" style="left:1425.00px;top:687.68px;font-size:15.5px;line-height:15.5px;font-weight:400;color:#2a2a40;transform:scaleX(0.9375);transform-origin:0 0;">Charlie Adams</div><div class="t" style="left:1425.00px;top:708.72px;font-size:13.8px;line-height:13.8px;font-weight:400;color:#3a3a50;transform:scaleX(0.9000);transform-origin:0 0;">1 month ago</div><div class="a" style="left:1608px;top:686px;width:250px;height:40px;background:#fff;border:1px solid #c6c6c6;border-radius:4px;box-sizing:border-box;"></div><div class="a" style="left:1810px;top:686px;width:1px;height:40px;background:#c6c6c6;"></div><div class="t" style="left:1667.35px;top:696.76px;font-size:15.4px;line-height:15.4px;font-weight:400;color:#5e5e5e;transform:scaleX(0.9751);transform-origin:0 0;-webkit-text-stroke:0.35px #5e5e5e;">New request</div><svg class="a" style="left:1829px;top:702px;" width="11" height="7" viewBox="0 0 11 7" fill="none"><path d="M0 0 H11 L5.5 6.5Z" fill="#666"/></svg><svg class="a" style="left:255px;top:770.5px;" width="23" height="33" viewBox="0 0 23 33" fill="none"><rect x="0.5" y="0.5" width="22" height="31.5" fill="#fff" stroke="#e3e3e3"/><path d="M1 4.2 L2.4 4.2 L6.6 18.8 L5.6 21 L1 9Z" fill="#3a9bb0"/><path d="M0.8 32 L0.8 24 L3.3 21 L5 32Z" fill="#6fae4a"/><path d="M4 32 L8 21 L12.2 32Z" fill="#f2cb3a"/><path d="M12.5 11 H14.5 M12.5 13.4 H19 M12.5 15.2 H18.5" stroke="#333" stroke-width="1.1"/><path d="M12.5 17.5 H15" stroke="#6fae4a" stroke-width="0.8"/></svg><div class="t" style="left:307.00px;top:778.38px;font-size:15.5px;line-height:15.5px;font-weight:400;color:#2a2a40;transform:scaleX(0.9434);transform-origin:0 0;">Presentation.pdf</div><div class="a" style="left:527px;top:771px;width:32px;height:32px;background:#a071f0;border-radius:50%;"></div><div class="t" style="left:527px;top:780.30px;font-size:15px;line-height:15px;font-weight:700;color:#fff;width:32px;text-align:center;">C</div><div class="t" style="left:571.50px;top:768.68px;font-size:15.5px;line-height:15.5px;font-weight:400;color:#2a2a40;transform:scaleX(0.9375);transform-origin:0 0;">Charlie Adams</div><div class="t" style="left:571.50px;top:789.72px;font-size:13.8px;line-height:13.8px;font-weight:400;color:#3a3a50;transform:scaleX(0.9000);transform-origin:0 0;">1 week ago</div><div class="t" style="left:973.50px;top:773.05px;font-size:15.3px;line-height:15.3px;font-weight:700;color:#2a2a40;transform:scaleX(0.9260);transform-origin:0 0;">Waiting to be signed</div><div class="a" style="left:973px;top:798px;width:150px;height:5px;border-radius:2.5px;overflow:hidden;"><div class="a" style="left:0.00px;top:0;width:74.00px;height:5px;background:#15b366;"></div><div class="a" style="left:76.00px;top:0;width:74.00px;height:5px;background:#c9ccd1;"></div></div><div class="a" style="left:1180px;top:771px;width:32px;height:32px;background:#4315d6;border-radius:50%;"></div><svg class="a" style="left:1188px;top:779px;" width="16" height="16" viewBox="0 0 16 16" fill="none"><path d="M1.2 11.5 C2.5 9.5 4.8 4.5 4.4 2.2 C4.1 0.6 2.6 0.9 2 3.5 C1.4 6.2 1.6 9.8 2.6 10.2 C3.6 10.6 5 8.5 6.5 7.2 C7.8 6.2 8.6 7.2 7.6 8.2 C6.6 9.2 5.8 9.6 6.2 10.2 C6.6 10.8 8.2 10 9.2 8.8 C9.8 8.2 10 9.8 10.8 9.6 C11.5 9.4 11.6 8.2 12.2 8.4 C12.8 8.6 12.6 9.8 13.4 9.4 C14 9.1 14.5 7.8 15 7" stroke="#fff" stroke-width="1.05" stroke-linecap="round" stroke-linejoin="round"/><path d="M0.8 14.6 H15" stroke="#fff" stroke-width="1.4"/></svg><div class="a" style="left:1380.7px;top:771px;width:32px;height:32px;background:#a071f0;border-radius:50%;"></div><div class="t" style="left:1380.7px;top:780.30px;font-size:15px;line-height:15px;font-weight:700;color:#fff;width:32px;text-align:center;">C</div><div class="t" style="left:1425.00px;top:768.68px;font-size:15.5px;line-height:15.5px;font-weight:400;color:#2a2a40;transform:scaleX(0.9375);transform-origin:0 0;">Charlie Adams</div><div class="t" style="left:1425.00px;top:789.72px;font-size:13.8px;line-height:13.8px;font-weight:400;color:#3a3a50;transform:scaleX(0.9000);transform-origin:0 0;">1 month ago</div><div class="a" style="left:1608px;top:767px;width:250px;height:40px;background:#20aeff;border-radius:4px;"></div><div class="a" style="left:1810px;top:767px;width:1px;height:40px;background:#fff;"></div><div class="t" style="left:1683.75px;top:778.23px;font-size:15.2px;line-height:15.2px;font-weight:700;color:#fff;transform:scaleX(0.9060);transform-origin:0 0;">Remind</div><svg class="a" style="left:1829px;top:783px;" width="11" height="7" viewBox="0 0 11 7" fill="none"><path d="M0 0 H11 L5.5 6.5Z" fill="#fff"/></svg><div class="a" style="left:239px;top:827px;width:1631px;height:75px;background:#f9f9f9;"></div><svg class="a" style="left:255px;top:851.5px;" width="23" height="33" viewBox="0 0 23 33" fill="none"><rect x="0.5" y="0.5" width="22" height="31.5" fill="#fff" stroke="#e6e6e6"/><rect x="5" y="2.3" width="5.5" height="1.8" fill="#555"/><path d="M2 5.5 H21 M2 7.5 H21 M2 9.5 H21 M2 11.5 H21 M2 13.5 H21 M2 16.5 H21 M2 18.5 H21 M2 21 H21 M2 24 H21 M2 27 H21 M2 29 H21" stroke="#c8c8c8" stroke-width="0.45"/><path d="M2 15 H21 M11 5.5 V13.5 M9 19 V27 M14 19 V27" stroke="#aaa" stroke-width="0.5"/></svg><div class="t" style="left:307.00px;top:859.38px;font-size:15.5px;line-height:15.5px;font-weight:400;color:#2a2a40;transform:scaleX(0.9449);transform-origin:0 0;">Health insurance form.pdf</div><div class="a" style="left:527px;top:852px;width:32px;height:32px;background:#ffad00;border-radius:50%;"></div><div class="t" style="left:527px;top:861.30px;font-size:15px;line-height:15px;font-weight:700;color:#fff;width:32px;text-align:center;">G</div><div class="t" style="left:571.50px;top:849.68px;font-size:15.5px;line-height:15.5px;font-weight:400;color:#2a2a40;transform:scaleX(0.8948);transform-origin:0 0;">Gabriel Johnson</div><div class="t" style="left:571.50px;top:870.72px;font-size:13.8px;line-height:13.8px;font-weight:400;color:#3a3a50;transform:scaleX(0.9000);transform-origin:0 0;">1 week ago</div><div class="t" style="left:973.50px;top:854.05px;font-size:15.3px;line-height:15.3px;font-weight:700;color:#2a2a40;transform:scaleX(0.9260);transform-origin:0 0;">Waiting to be signed</div><div class="a" style="left:973px;top:879px;width:150px;height:5px;border-radius:2.5px;overflow:hidden;"><div class="a" style="left:0.00px;top:0;width:48.67px;height:5px;background:#15b366;"></div><div class="a" style="left:50.67px;top:0;width:48.67px;height:5px;background:#15b366;"></div><div class="a" style="left:101.33px;top:0;width:48.67px;height:5px;background:#c9ccd1;"></div></div><div class="a" style="left:1180px;top:852px;width:32px;height:32px;background:#4315d6;border-radius:50%;"></div><svg class="a" style="left:1188px;top:860px;" width="16" height="16" viewBox="0 0 16 16" fill="none"><path d="M1.2 11.5 C2.5 9.5 4.8 4.5 4.4 2.2 C4.1 0.6 2.6 0.9 2 3.5 C1.4 6.2 1.6 9.8 2.6 10.2 C3.6 10.6 5 8.5 6.5 7.2 C7.8 6.2 8.6 7.2 7.6 8.2 C6.6 9.2 5.8 9.6 6.2 10.2 C6.6 10.8 8.2 10 9.2 8.8 C9.8 8.2 10 9.8 10.8 9.6 C11.5 9.4 11.6 8.2 12.2 8.4 C12.8 8.6 12.6 9.8 13.4 9.4 C14 9.1 14.5 7.8 15 7" stroke="#fff" stroke-width="1.05" stroke-linecap="round" stroke-linejoin="round"/><path d="M0.8 14.6 H15" stroke="#fff" stroke-width="1.4"/></svg><div class="a" style="left:1380.7px;top:852px;width:32px;height:32px;background:#a071f0;border-radius:50%;"></div><div class="t" style="left:1380.7px;top:861.30px;font-size:15px;line-height:15px;font-weight:700;color:#fff;width:32px;text-align:center;">C</div><div class="t" style="left:1425.00px;top:849.68px;font-size:15.5px;line-height:15.5px;font-weight:400;color:#2a2a40;transform:scaleX(0.9375);transform-origin:0 0;">Charlie Adams</div><div class="t" style="left:1425.00px;top:870.72px;font-size:13.8px;line-height:13.8px;font-weight:400;color:#3a3a50;transform:scaleX(0.9000);transform-origin:0 0;">1 week ago</div><div class="a" style="left:1608px;top:848px;width:250px;height:40px;background:#20aeff;border-radius:4px;"></div><div class="a" style="left:1810px;top:848px;width:1px;height:40px;background:#fff;"></div><div class="t" style="left:1683.75px;top:859.23px;font-size:15.2px;line-height:15.2px;font-weight:700;color:#fff;transform:scaleX(0.9060);transform-origin:0 0;">Remind</div><svg class="a" style="left:1829px;top:864px;" width="11" height="7" viewBox="0 0 11 7" fill="none"><path d="M0 0 H11 L5.5 6.5Z" fill="#fff"/></svg><div class="a" style="left:1894px;top:260px;width:10px;height:229px;background:#c1c1c1;border-left:1px solid #aaa;border-top:1px solid #aaa;box-sizing:border-box;"></div><div class="a" style="left:215px;top:902px;width:1689px;height:49px;background:#f9f9f9;border-top:1px solid #e6e6e6;box-sizing:border-box;"></div><div class="t" style="left:239.40px;top:919.13px;font-size:15.2px;line-height:15.2px;font-weight:400;color:#777;transform:scaleX(0.9544);transform-origin:0 0;">Circularo powered by Karel © 2025</div><svg class="a" style="left:1851px;top:917px;" width="18" height="18" viewBox="0 0 18 18" fill="none"><circle cx="9" cy="9" r="8.3" stroke="#666" stroke-width="1.1"/><path d="M6.7 6.8 C6.7 5.2 7.7 4.4 9 4.4 C10.3 4.4 11.3 5.3 11.3 6.5 C11.3 8 9.3 8.7 9.2 10.8" stroke="#666" stroke-width="1.1"/><circle cx="9" cy="12.6" r="0.8" fill="#666"/></svg><div class="a" style="left:303px;top:261px;width:157px;height:376px;background:#fff;border-radius:4px;box-shadow:0 1px 6px rgba(0,0,0,0.16);"></div><div class="t" style="left:327.30px;top:283.97px;font-size:14.8px;line-height:14.8px;font-weight:400;color:#2a2a40;transform:scaleX(0.9670);transform-origin:0 0;">Created by</div><svg class="a" style="left:426.5px;top:285.5px;" width="8" height="13" viewBox="0 0 8 13" fill="none"><path d="M1 0.8 L6.5 6.5 L1 12.2" stroke="#333" stroke-width="1.1"/></svg><div class="t" style="left:327.30px;top:328.97px;font-size:14.8px;line-height:14.8px;font-weight:400;color:#2a2a40;transform:scaleX(0.9670);transform-origin:0 0;">Waiting for</div><svg class="a" style="left:426.5px;top:330.5px;" width="8" height="13" viewBox="0 0 8 13" fill="none"><path d="M1 0.8 L6.5 6.5 L1 12.2" stroke="#333" stroke-width="1.1"/></svg><div class="t" style="left:327.30px;top:373.97px;font-size:14.8px;line-height:14.8px;font-weight:400;color:#2a2a40;transform:scaleX(0.9670);transform-origin:0 0;">Reviewed by</div><svg class="a" style="left:426.5px;top:375.5px;" width="8" height="13" viewBox="0 0 8 13" fill="none"><path d="M1 0.8 L6.5 6.5 L1 12.2" stroke="#333" stroke-width="1.1"/></svg><div class="t" style="left:327.30px;top:418.97px;font-size:14.8px;line-height:14.8px;font-weight:400;color:#2a2a40;transform:scaleX(0.9670);transform-origin:0 0;">Accepted by</div><svg class="a" style="left:426.5px;top:420.5px;" width="8" height="13" viewBox="0 0 8 13" fill="none"><path d="M1 0.8 L6.5 6.5 L1 12.2" stroke="#333" stroke-width="1.1"/></svg><div class="t" style="left:327.30px;top:463.97px;font-size:14.8px;line-height:14.8px;font-weight:400;color:#2a2a40;transform:scaleX(0.9670);transform-origin:0 0;">Approved by</div><svg class="a" style="left:426.5px;top:465.5px;" width="8" height="13" viewBox="0 0 8 13" fill="none"><path d="M1 0.8 L6.5 6.5 L1 12.2" stroke="#333" stroke-width="1.1"/></svg><div class="t" style="left:327.30px;top:508.97px;font-size:14.8px;line-height:14.8px;font-weight:400;color:#2a2a40;transform:scaleX(0.9670);transform-origin:0 0;">Signed by</div><svg class="a" style="left:426.5px;top:510.5px;" width="8" height="13" viewBox="0 0 8 13" fill="none"><path d="M1 0.8 L6.5 6.5 L1 12.2" stroke="#333" stroke-width="1.1"/></svg><div class="t" style="left:327.30px;top:553.97px;font-size:14.8px;line-height:14.8px;font-weight:400;color:#2a2a40;transform:scaleX(0.9670);transform-origin:0 0;">Shared with</div><svg class="a" style="left:426.5px;top:555.5px;" width="8" height="13" viewBox="0 0 8 13" fill="none"><path d="M1 0.8 L6.5 6.5 L1 12.2" stroke="#333" stroke-width="1.1"/></svg><div class="t" style="left:327.30px;top:598.97px;font-size:14.8px;line-height:14.8px;font-weight:400;color:#2a2a40;transform:scaleX(0.9670);transform-origin:0 0;">Rejected by</div><svg class="a" style="left:426.5px;top:600.5px;" width="8" height="13" viewBox="0 0 8 13" fill="none"><path d="M1 0.8 L6.5 6.5 L1 12.2" stroke="#333" stroke-width="1.1"/></svg>
</body></html>
